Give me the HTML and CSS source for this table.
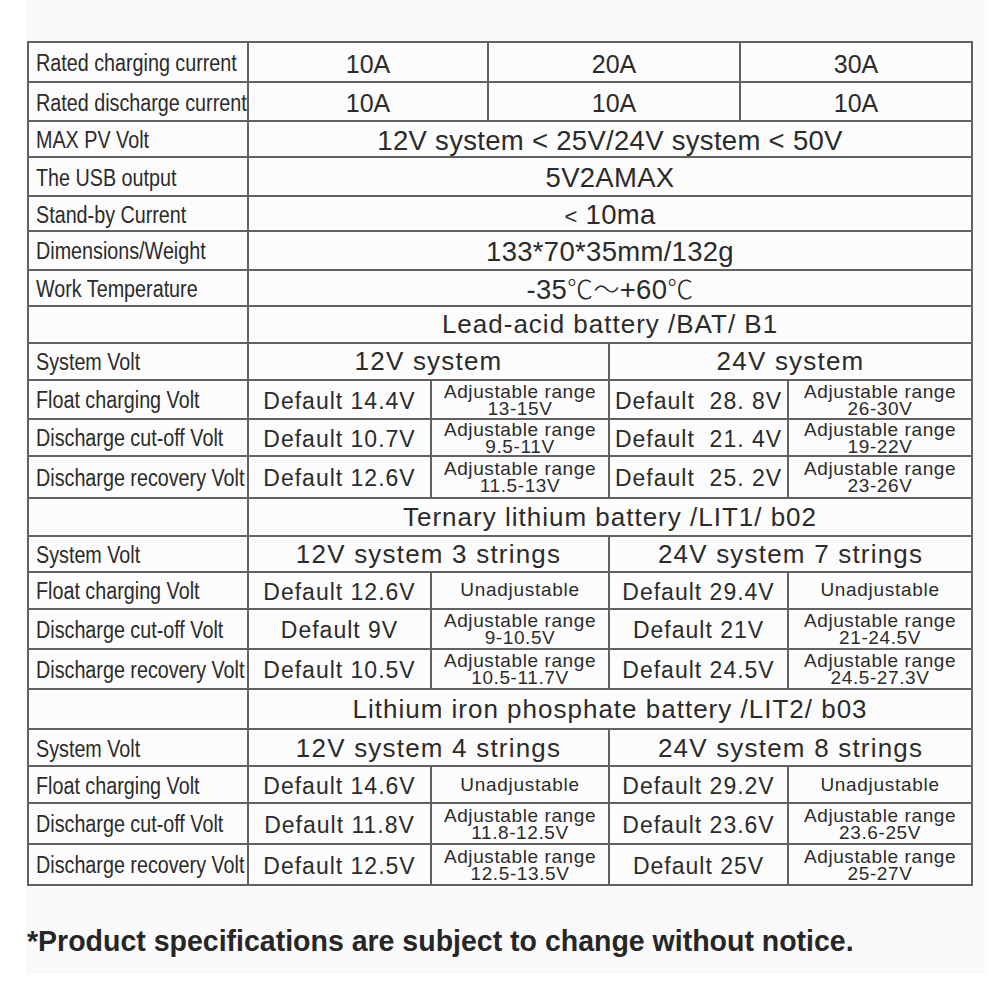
FILE: index.html
```html
<!DOCTYPE html>
<html lang="en">
<head>
<meta charset="utf-8">
<title>Specifications</title>
<link rel="stylesheet" href="styles.css">
</head>
<body>
<div class="sheet">
  <table class="spec">
    <colgroup>
      <col class="c1"><col class="c2"><col class="c3"><col class="c4"><col class="c5"><col class="c6"><col class="c7">
    </colgroup>
    <tbody>
      <tr><td class="lbl"><span>Rated charging current</span></td><td colspan="2" class="amp">10A</td><td colspan="2" class="amp">20A</td><td colspan="2" class="amp">30A</td></tr>
      <tr><td class="lbl"><span>Rated discharge current</span></td><td colspan="2" class="amp">10A</td><td colspan="2" class="amp">10A</td><td colspan="2" class="amp">10A</td></tr>
      <tr><td class="lbl"><span>MAX PV Volt</span></td><td colspan="6" class="big">12V system &lt; 25V/24V system &lt; 50V</td></tr>
      <tr><td class="lbl"><span>The USB output</span></td><td colspan="6" class="big">5V2AMAX</td></tr>
      <tr><td class="lbl"><span>Stand-by Current</span></td><td colspan="6" class="big"><span class="lt">&lt;</span> 10ma</td></tr>
      <tr><td class="lbl"><span>Dimensions/Weight</span></td><td colspan="6" class="big">133*70*35mm/132g</td></tr>
      <tr><td class="lbl"><span>Work Temperature</span></td><td colspan="6" class="big">-35<span class="cjk">℃～</span>+60<span class="cjk">℃</span></td></tr>

      <tr><td class="lbl"></td><td colspan="6" class="head">Lead-acid battery /BAT/ B1</td></tr>
      <tr><td class="lbl"><span>System Volt</span></td><td colspan="3" class="sys">12V system</td><td colspan="3" class="sys">24V system</td></tr>
      <tr><td class="lbl"><span>Float charging Volt</span></td><td class="def">Default 14.4V</td><td colspan="2" class="adj">Adjustable range<br>13-15V</td><td colspan="2" class="def">Default&nbsp; 28. 8V</td><td class="adj">Adjustable range<br>26-30V</td></tr>
      <tr><td class="lbl"><span>Discharge cut-off Volt</span></td><td class="def">Default 10.7V</td><td colspan="2" class="adj">Adjustable range<br>9.5-11V</td><td colspan="2" class="def">Default&nbsp; 21. 4V</td><td class="adj">Adjustable range<br>19-22V</td></tr>
      <tr><td class="lbl"><span>Discharge recovery Volt</span></td><td class="def">Default 12.6V</td><td colspan="2" class="adj">Adjustable range<br>11.5-13V</td><td colspan="2" class="def">Default&nbsp; 25. 2V</td><td class="adj">Adjustable range<br>23-26V</td></tr>

      <tr><td class="lbl"></td><td colspan="6" class="head">Ternary lithium battery /LIT1/ b02</td></tr>
      <tr><td class="lbl"><span>System Volt</span></td><td colspan="3" class="sys">12V system 3 strings</td><td colspan="3" class="sys">24V system 7 strings</td></tr>
      <tr><td class="lbl"><span>Float charging Volt</span></td><td class="def">Default 12.6V</td><td colspan="2" class="una">Unadjustable</td><td colspan="2" class="def">Default 29.4V</td><td class="una">Unadjustable</td></tr>
      <tr><td class="lbl"><span>Discharge cut-off Volt</span></td><td class="def">Default 9V</td><td colspan="2" class="adj">Adjustable range<br>9-10.5V</td><td colspan="2" class="def">Default 21V</td><td class="adj">Adjustable range<br>21-24.5V</td></tr>
      <tr><td class="lbl"><span>Discharge recovery Volt</span></td><td class="def">Default 10.5V</td><td colspan="2" class="adj">Adjustable range<br>10.5-11.7V</td><td colspan="2" class="def">Default 24.5V</td><td class="adj">Adjustable range<br>24.5-27.3V</td></tr>

      <tr><td class="lbl"></td><td colspan="6" class="head">Lithium iron phosphate battery /LIT2/ b03</td></tr>
      <tr><td class="lbl"><span>System Volt</span></td><td colspan="3" class="sys">12V system 4 strings</td><td colspan="3" class="sys">24V system 8 strings</td></tr>
      <tr><td class="lbl"><span>Float charging Volt</span></td><td class="def">Default 14.6V</td><td colspan="2" class="una">Unadjustable</td><td colspan="2" class="def">Default 29.2V</td><td class="una">Unadjustable</td></tr>
      <tr><td class="lbl"><span>Discharge cut-off Volt</span></td><td class="def">Default 11.8V</td><td colspan="2" class="adj">Adjustable range<br>11.8-12.5V</td><td colspan="2" class="def">Default 23.6V</td><td class="adj">Adjustable range<br>23.6-25V</td></tr>
      <tr><td class="lbl"><span>Discharge recovery Volt</span></td><td class="def">Default 12.5V</td><td colspan="2" class="adj">Adjustable range<br>12.5-13.5V</td><td colspan="2" class="def">Default 25V</td><td class="adj">Adjustable range<br>25-27V</td></tr>
    </tbody>
  </table>
  <p class="note"><span>*Product specifications are subject to change without notice.</span></p>
</div>
</body>
</html>
```

FILE: styles.css
```css
html, body {
  margin: 0;
  padding: 0;
  background: #ffffff;
}

body {
  font-family: "Liberation Sans", Arial, sans-serif;
  color: #2b2b2b;
}

.sheet {
  width: 962px;
  height: 974px;
  margin-left: 26px;
  padding-top: 41px;
  box-sizing: border-box;
  background: #fafafa;
}

.spec {
  border-collapse: collapse;
  table-layout: fixed;
  width: 944px;
  margin-left: 1px;
  background: #fcfcfc;
}

.spec td {
  border: 2px solid #616161;
  padding: 0;
  text-align: center;
  vertical-align: middle;
  white-space: nowrap;
  overflow: hidden;
}

.c1 { width: 220px; }
.c2 { width: 183px; }
.c3 { width: 57px; }
.c4 { width: 121px; }
.c5 { width: 131px; }
.c6 { width: 48px; }
.c7 { width: 184px; }

/* row heights measured from the sheet */
.spec tr:nth-child(1)  { height: 40px; }
.spec tr:nth-child(2)  { height: 39px; }
.spec tr:nth-child(3)  { height: 36px; }
.spec tr:nth-child(4)  { height: 39.3px; }
.spec tr:nth-child(5)  { height: 35px; }
.spec tr:nth-child(6)  { height: 38.3px; }
.spec tr:nth-child(7)  { height: 36.4px; }
.spec tr:nth-child(8)  { height: 36.6px; }
.spec tr:nth-child(9)  { height: 37.7px; }
.spec tr:nth-child(10) { height: 38.3px; }
.spec tr:nth-child(11) { height: 37.4px; }
.spec tr:nth-child(12) { height: 42px; }
.spec tr:nth-child(13) { height: 38.3px; }
.spec tr:nth-child(14) { height: 35.7px; }
.spec tr:nth-child(15) { height: 36.6px; }
.spec tr:nth-child(16) { height: 40px; }
.spec tr:nth-child(17) { height: 40.7px; }
.spec tr:nth-child(18) { height: 40px; }
.spec tr:nth-child(19) { height: 37px; }
.spec tr:nth-child(20) { height: 36.7px; }
.spec tr:nth-child(21) { height: 40.6px; }
.spec tr:nth-child(22) { height: 41px; }

.spec td.lbl {
  text-align: left;
  padding-left: 7px;
  padding-top: 2px;
  font-size: 23.5px;
  line-height: 26px;
}

.lbl span {
  display: inline-block;
  transform: scaleX(0.84);
  transform-origin: left center;
}

.amp {
  font-size: 25px;
  line-height: 28px;
  padding-top: 3px !important;
}

.big {
  font-size: 27.5px;
  line-height: 26px;
  letter-spacing: 0.3px;
  padding-top: 3px !important;
}

.lt {
  font-size: 22px;
  line-height: 1;
}

.cjk {
  font-family: "Noto Sans CJK SC", "Liberation Sans", sans-serif;
  font-weight: 300;
  font-size: 26px;
  line-height: 1;
}

.head {
  font-size: 26px;
  line-height: 28px;
  letter-spacing: 1px;
}

.sys {
  font-size: 26px;
  line-height: 28px;
  letter-spacing: 1.2px;
}

.def {
  font-size: 23px;
  line-height: 26px;
  letter-spacing: 1px;
  padding-top: 3px !important;
}

.adj {
  font-size: 19px;
  line-height: 17px;
  letter-spacing: 0.6px;
  padding-top: 1px !important;
}

.una {
  font-size: 19px;
  line-height: 22px;
  letter-spacing: 0.7px;
}

.note {
  margin: 39px 0 0 1px;
  font-size: 30px;
  line-height: 32px;
  font-weight: bold;
  color: #262626;
}

.note span {
  display: inline-block;
  transform: scaleX(0.95);
  transform-origin: left center;
  white-space: nowrap;
}
```
